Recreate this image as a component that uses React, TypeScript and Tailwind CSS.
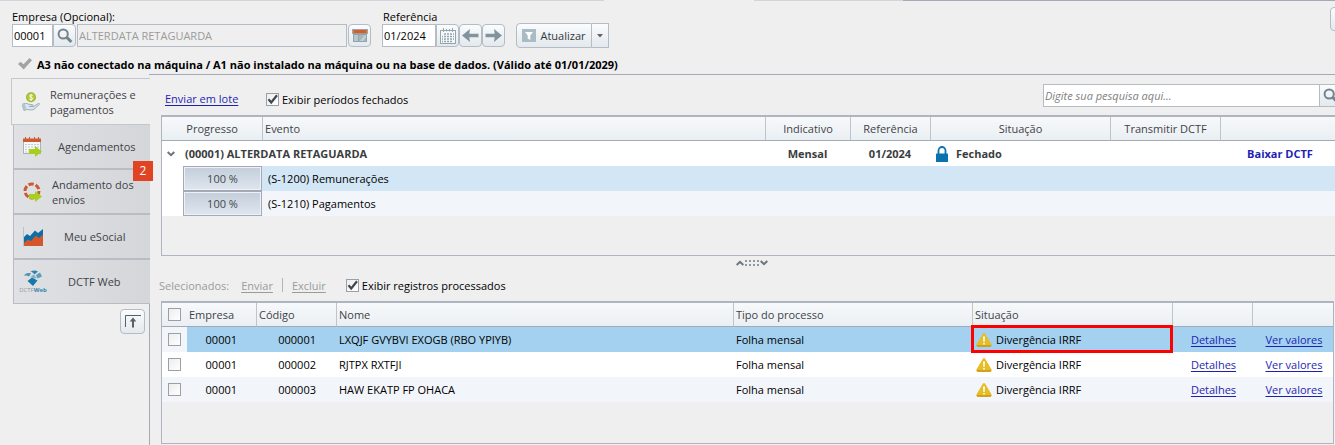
import type { ReactNode } from "react";

type SvgProps = { className?: string };

const iconButton =
  "flex shrink-0 items-center justify-center border border-[#b4bcc6] bg-gradient-to-b from-[#fafcfd] to-[#e4e9ed]";

function SearchIcon({ className }: SvgProps) {
  return (
    <svg viewBox="0 0 16 16" className={className ?? "h-4 w-4"} fill="none" stroke="#74858f">
      <circle cx="6.2" cy="6" r="4.6" strokeWidth="2" />
      <path d="M9.8 9.4 14.4 14" strokeWidth="3" />
    </svg>
  );
}

function WindowIcon() {
  return (
    <svg viewBox="0 0 16 14" className="h-[14px] w-4">
      <rect x="0" y="0" width="16" height="5" fill="#a9a39d" />
      <rect x="1.5" y="1" width="13" height="3.2" fill="#cf5f2e" />
      <rect x="1" y="5" width="14" height="8" fill="#8fa3ad" />
      <rect x="2" y="6" width="4" height="6" fill="#b8c6cd" />
      <rect x="7" y="6" width="7" height="6" fill="#a5b6be" />
      <path d="M8 12 13 6h1v2l-3 4z" fill="#c7d2d7" />
    </svg>
  );
}

function CalendarIcon() {
  return (
    <svg viewBox="0 0 16 16" className="h-4 w-4">
      <rect x="0.5" y="2.5" width="15" height="13" fill="#f7f9fa" stroke="#93a5ae" />
      <path d="M3.5 0v4M12.5 0v4M6.5 1v2.500M9.500 1v2.500" stroke="#93a5ae" />
      <path
        d="M4 6h2M7 6h2M10 6h2M13 6h1M2 8.500h1M4 8.500h2M7 8.500h2M10 8.500h2M13 8.500h1M2 11h1M4 11h2M7 11h2M10 11h2M13 11h1M2 13.500h1M4 13.500h2M7 13.500h2M10 13.500h2"
        stroke="#93a5ae"
        strokeWidth="1.600"
      />
    </svg>
  );
}

function ArrowIcon({ className }: SvgProps) {
  return (
    <svg viewBox="0 0 17 13" className={className ?? "h-[13px] w-[17px]"}>
      <path d="M0 6.500 8 0 7.300 4.700H16.500V8.300H7.300L8 13Z" fill="#81949d" />
    </svg>
  );
}

function FunnelIcon() {
  return (
    <svg viewBox="0 0 14 13" className="h-[13px] w-[14px]">
      <rect width="14" height="13" fill="#a9bbc4" />
      <path d="M3 3h8L8.300 6.500V11L5.700 9.500V6.500Z" fill="#fff" />
    </svg>
  );
}

function CheckMark() {
  return (
    <svg viewBox="0 0 14 12" className="h-3 w-[14px]">
      <path d="M0 6 2.500 3.800 5.500 6.300 11.500 0 14 2.300 5.700 11.500Z" fill="#a3a3a3" />
    </svg>
  );
}

function MoneyHandIcon() {
  return (
    <svg viewBox="0 0 18 19" className="h-[19px] w-[18px]">
      <circle cx="9" cy="5.300" r="5" fill="#9db82b" />
      <circle cx="9" cy="5.300" r="3.700" fill="#b3cc3d" />
      <path d="M10.700 3.300C8.500 2 6.800 3.800 8.500 5c1.800.7 2.700.9 2 2.200-.8.900-2.200.7-3.200 0M9 2v6.800" stroke="#fff" fill="none" strokeWidth="0.900" />
      <path
        d="M0 12.500C2 11.200 4.500 11 6.500 12.200l4 .4c1 .2.900 1.500 0 1.600L7.500 14.400l4 .200 4.700-3c1-.5 1.700.2 1 1l-5 4.600c-1.500 1-5 .8-7 .2L2 18.500Z"
        fill="#dbe5ea"
        stroke="#93a8b3"
        strokeWidth="0.900"
      />
      <path d="M0 12.500 2.800 11.600 4.300 16.700 2 18.500Z" fill="#b5c5ce" />
    </svg>
  );
}

function GreenArrow() {
  return <path d="M6 12h6V9l7 5.500L12 20v-3H6Z" fill="#a8cf1d" />;
}

function ScheduleIcon() {
  return (
    <svg viewBox="0 0 20 20" className="h-5 w-5">
      <rect x="0.500" y="3" width="17" height="13.500" fill="#f6f7f8" stroke="#a8b2b8" />
      <rect x="0" y="1.500" width="18" height="3.500" fill="#cc5a35" />
      <path d="M2.500 0v3M6.500 0v3M11.500 0v3M15.500 0v3" stroke="#cc5a35" />
      <path d="M2 7.500h14M2 10h14M2 12.500h6M2 15h5" stroke="#c2cbd0" strokeDasharray="2 1" />
      <GreenArrow />
    </svg>
  );
}

function ProgressIcon() {
  return (
    <svg viewBox="0 0 20 20" className="h-5 w-5">
      <circle cx="9" cy="9" r="7" fill="none" stroke="#cc5a35" strokeWidth="3" strokeDasharray="5.300 2" />
      <GreenArrow />
    </svg>
  );
}

function ChartIcon() {
  return (
    <svg viewBox="0 0 20 20" className="h-5 w-5">
      <path d="M0.500 0v19.500" stroke="#b9c2cb" />
      <path d="M1 10 4 7 7 9 12 3.500 15 6 20 2V19H1Z" fill="#0d6ea6" />
      <path d="M1 16 5 12.500 8 14 13 8.500 16 11 20 7.500V19H1Z" fill="#d4572c" />
    </svg>
  );
}

function DctfIcon() {
  return (
    <span className="flex flex-col items-center">
      <svg viewBox="0 0 18 16" className="h-4 w-[18px]">
        <path d="M0 5.500C2 3 4.500 2.500 7 3.500L5 6.500C3.500 5.500 2 5.200 0 5.500Z" fill="#4f93b5" />
        <path d="M6.500 1.500C9 0 12 0 14 1.500L10.500 4.500C9.500 3 8.500 2 6.500 1.500Z" fill="#2f86ad" />
        <path d="M12 5 16 2.500 18 6.500 13.500 8.500Z" fill="#5c9dbb" />
        <path d="M3.500 11 8 7.500 13.500 10.500 9 16Z" fill="#1679a8" />
        <path d="M6.500 7 9.500 4.500 12.500 7.500 11 8.800Z" fill="#7fb2c9" />
      </svg>
      <span className="text-[6px] leading-[8px] text-[#8f9ba4]">
        DCTF<b className="text-[#3a87ac]">Web</b>
      </span>
    </span>
  );
}

function CollapseIcon() {
  return (
    <svg viewBox="0 0 16 13" className="h-[13px] w-4" fill="none" stroke="#566168">
      <path d="M0.500 12V0.500H16" />
      <path d="M8 12.500V5" strokeWidth="2" />
      <path d="M4.700 6.500 8 2.500 11.300 6.500Z" fill="#566168" stroke="none" />
    </svg>
  );
}

function ExpandIcon() {
  return (
    <svg viewBox="0 0 16 13" className="h-[13px] w-4" fill="none" stroke="#566168">
      <path d="M0 7.500h5v5H1V7" strokeWidth="2" />
      <path d="M7 6 14 1M9 1h5v5" />
    </svg>
  );
}

function LockIcon() {
  return (
    <svg viewBox="0 0 12 16" className="h-4 w-3 shrink-0">
      <path d="M2.500 8V4.500a3.500 3.500 0 0 1 7 0V8" fill="none" stroke="#0a73ad" strokeWidth="1.800" />
      <rect y="7.500" width="12" height="8.500" rx="0.500" fill="#0a73ad" />
    </svg>
  );
}

function WarningIcon() {
  return (
    <svg viewBox="0 0 16 14" className="h-[14px] w-4 shrink-0">
      <path d="M8 0.300c.8 0 1.200.4 1.600 1.100l5.800 9.900c.7 1.300.1 2.400-1.300 2.400H1.900c-1.400 0-2-1.100-1.300-2.400L6.400 1.400C6.800.7 7.200.3 8 .3Z" fill="#e6bd25" />
      <path d="M.5 12.200c.3.900.8 1.500 1.500 1.500h12c.7 0 1.200-.6 1.500-1.500Z" fill="#c9951b" />
      <path d="M7 3.500h2L8.600 9H7.400ZM7.200 10h1.600v1.500H7.200Z" fill="#fff" />
    </svg>
  );
}

function Chevron({ className }: SvgProps) {
  return (
    <svg viewBox="0 0 8 6" className={className ?? "h-[6px] w-2"} fill="none" stroke="#6d747b" strokeWidth="2">
      <path d="M0.700 1 4 4.200 7.300 1" />
    </svg>
  );
}

function Tick({ label, checked, hiddenLabel }: { label: string; checked?: boolean; hiddenLabel?: boolean }) {
  return (
    <label className="flex items-center gap-[3px] text-black">
      <span className="relative block h-[13px] w-[13px] shrink-0">
        <input
          type="checkbox"
          defaultChecked={checked}
          aria-label={hiddenLabel ? label : undefined}
          className="peer block h-[13px] w-[13px] appearance-none border border-[#9a9fa8] bg-gradient-to-br from-[#eceded] to-white"
        />
        <svg
          viewBox="0 0 13 13"
          className="pointer-events-none absolute inset-0 hidden h-[13px] w-[13px] peer-checked:block"
          fill="none"
          stroke="#40464c"
          strokeWidth="2.200"
        >
          <path d="M2.500 6.300 5.200 9.500 11 2.300" />
        </svg>
      </span>
      {!hiddenLabel && <span>{label}</span>}
    </label>
  );
}

const sideTabs: { label: string; icon: ReactNode; pad: string; badge?: number }[] = [
  { label: "Agendamentos", icon: <ScheduleIcon />, pad: "pl-3.5" },
  { label: "Andamento dos envios", icon: <ProgressIcon />, pad: "pl-2 pr-2", badge: 2 },
  { label: "Meu eSocial", icon: <ChartIcon />, pad: "pl-5" },
  { label: "DCTF Web", icon: <DctfIcon />, pad: "pl-6" },
];

const events = [
  { name: "(S-1200) Remunerações", progress: 100, tone: "bg-[#d2e6f5]" },
  { name: "(S-1210) Pagamentos", progress: 100, tone: "bg-[#f2f5fa]" },
];

const records = [
  { company: "00001", code: "000001", name: "LXQJF GVYBVI EXOGB (RBO YPIYB)", tone: "bg-[#a3d1ef]", lead: "bg-[#f2f5fa]", marked: true },
  { company: "00001", code: "000002", name: "RJTPX RXTFJI", tone: "bg-white", lead: "bg-white", marked: false },
  { company: "00001", code: "000003", name: "HAW EKATP FP OHACA", tone: "bg-[#f2f5fa]", lead: "bg-[#f2f5fa]", marked: false },
];

const headCell =
  "h-6 border-b border-[#a4a9b5] p-0 font-normal text-[#3f4347] bg-gradient-to-b from-[#f7f9fb] to-[#eaeff3]";
const divided = "border-l border-l-[#bfc3cb]";
const link = "text-[#1f1fb4] underline underline-offset-2";

function Header() {
  return (
    <header>
      <div className="flex h-px">
        <div className="w-[604px] bg-[#d3d4da]" />
        <div className="w-[150px]" />
        <div className="w-[149px] bg-[#d3d4da]" />
        <div className="flex-1 bg-[#a4a9b5]" />
      </div>
      <div className="flex items-start pl-3 pt-[9px]">
        <div>
          <label htmlFor="company" className="block h-[14px] leading-[14px]">
            Empresa (Opcional):
          </label>
          <div className="flex h-[23px]">
            <input id="company" defaultValue="00001" className="w-[41px] border border-[#b4bcc6] bg-white px-px" />
            <button aria-label="Pesquisar empresa" className={`${iconButton} w-[23px] rounded-r-sm`}>
              <SearchIcon />
            </button>
            <input
              aria-label="Nome da empresa"
              readOnly
              defaultValue="ALTERDATA RETAGUARDA"
              className="ml-px w-[270px] border border-[#b4bcc6] px-px text-[#9b9b9b]"
            />
            <button aria-label="Abrir cadastro" className={`${iconButton} ml-px w-[23px] rounded-sm`}>
              <WindowIcon />
            </button>
          </div>
        </div>
        <div className="ml-[11px]">
          <label htmlFor="reference" className="block h-[14px] pl-px leading-[14px]">
            Referência
          </label>
          <div className="flex h-[23px]">
            <input id="reference" defaultValue="01/2024" className="w-[54px] border border-[#b4bcc6] bg-white px-px" />
            <button aria-label="Calendário" className={`${iconButton} w-[23px] rounded-r-sm`}>
              <CalendarIcon />
            </button>
            <button aria-label="Mês anterior" className={`${iconButton} w-[23px] rounded-sm`}>
              <ArrowIcon />
            </button>
            <button aria-label="Próximo mês" className={`${iconButton} w-[23px] rounded-sm`}>
              <ArrowIcon className="h-[13px] w-[17px] rotate-180" />
            </button>
          </div>
        </div>
        <div className="ml-[11px] mt-[13px] flex h-[25px]">
          <button className={`${iconButton} w-[76px] gap-1 rounded-l-sm text-[#33383c]`}>
            <FunnelIcon />
            Atualizar
          </button>
          <button aria-label="Mais opções" className={`${iconButton} w-[17px] border-l-0`}>
            <svg viewBox="0 0 6 4" className="h-1 w-1.5">
              <path d="M0 0h6L3 3.500Z" fill="#5d646b" />
            </svg>
          </button>
        </div>
        <button aria-label="Expandir" className={`${iconButton} -mr-5 -mt-[3px] ml-auto h-6 w-[25px] rounded-sm`}>
          <ExpandIcon />
        </button>
      </div>
      <p className="flex h-[26px] items-center gap-[5px] pl-[18px] pt-1.5 font-bold">
        <CheckMark />
        A3 não conectado na máquina / A1 não instalado na máquina ou na base de dados. (Válido até 01/01/2029)
      </p>
    </header>
  );
}

function Sidebar() {
  return (
    <aside className="flex w-[150px] shrink-0 flex-col pl-[11px] pt-1 text-[#3f4347]">
      <nav>
        <button className="flex h-[47px] w-full items-center gap-2.5 border border-r-0 border-[#c3c7ce] pl-2.5 text-left">
          <MoneyHandIcon />
          <span className="flex-1 pr-2">Remunerações e pagamentos</span>
        </button>
        <div className="ml-0.5 border-b border-l border-[#b9bcc4]">
          {sideTabs.map((tab, i) => (
            <button
              key={tab.label}
              className={`relative flex w-full items-center bg-gradient-to-r from-[#dfe1e4] to-[#d4d6da] pl-2 text-left ${
                i < sideTabs.length - 1 ? "h-[45px] border-b-2 border-[#b9bcc4]" : "h-[43px]"
              }`}
            >
              <span className="flex w-[22px] shrink-0 justify-center">{tab.icon}</span>
              <span className={`flex-1 ${tab.pad}`}>{tab.label}</span>
              {tab.badge && (
                <span className="absolute -right-[3px] -top-[9px] z-10 flex h-5 w-5 items-center justify-center bg-[#e04423] text-xs text-white">
                  {tab.badge}
                </span>
              )}
            </button>
          ))}
        </div>
      </nav>
      <div className="flex flex-1 items-start justify-end border-r border-[#a4a9b5] pr-1 pt-[5px]">
        <button aria-label="Recolher menu" className={`${iconButton} h-[25px] w-[25px] rounded-sm`}>
          <CollapseIcon />
        </button>
      </div>
    </aside>
  );
}

function EventsTable() {
  return (
    <div className="-mr-1.5 ml-[11px] min-h-[141px] border border-t-2 border-[#afb5c0]">
      <table className="w-full table-fixed border-separate border-spacing-0">
        <colgroup>
          <col className="w-[21px]" />
          <col className="w-[79px]" />
          <col />
          <col className="w-[85px]" />
          <col className="w-[80px]" />
          <col className="w-[180px]" />
          <col className="w-[110px]" />
          <col className="w-[120px]" />
        </colgroup>
        <thead>
          <tr>
            <th colSpan={2} className={headCell}>Progresso</th>
            <th className={`${headCell} ${divided} pl-0.5 text-left`}>Evento</th>
            <th className={`${headCell} ${divided}`}>Indicativo</th>
            <th className={`${headCell} ${divided}`}>Referência</th>
            <th className={`${headCell} ${divided}`}>Situação</th>
            <th className={`${headCell} ${divided}`}>Transmitir DCTF</th>
            <th className={`${headCell} ${divided}`} />
          </tr>
        </thead>
        <tbody>
          <tr className="bg-white font-bold text-[#3a3d40]">
            <td className="h-[25px] p-0">
              <button aria-label="Recolher grupo" className="ml-[5px] block">
                <Chevron />
              </button>
            </td>
            <td colSpan={2} className="p-0 pl-0.5">(00001) ALTERDATA RETAGUARDA</td>
            <td className="p-0 text-center">Mensal</td>
            <td className="p-0 text-center">01/2024</td>
            <td className="p-0">
              <span className="flex items-center gap-2 pl-1.5">
                <LockIcon />
                Fechado
              </span>
            </td>
            <td className="p-0" />
            <td className="p-0 text-center">
              <a href="#baixar" className="text-[#1f1fb4]">Baixar DCTF</a>
            </td>
          </tr>
          {events.map((event) => (
            <tr key={event.name} className={event.tone}>
              <td className="h-[25px] bg-white p-0" />
              <td className="p-0">
                <div className="flex h-[25px] items-center justify-center border border-[#a4a9b5] bg-gradient-to-b from-[#c3cedb] to-[#dfe6ee] text-[#43484d] shadow-[inset_0_0_0_1px_#eef1f5]">
                  {event.progress} %
                </div>
              </td>
              <td colSpan={6} className="p-0 pl-1.5">{event.name}</td>
            </tr>
          ))}
        </tbody>
      </table>
    </div>
  );
}

function RecordsTable() {
  return (
    <div className="mb-px ml-[11px] mr-px flex-1 border border-t-2 border-[#afb5c0]">
      <table className="w-full table-fixed border-separate border-spacing-0">
        <colgroup>
          <col className="w-[25px]" />
          <col className="w-[69px]" />
          <col className="w-[80px]" />
          <col />
          <col className="w-[239px]" />
          <col className="w-[200px]" />
          <col className="w-[80px]" />
          <col className="w-[81px]" />
        </colgroup>
        <thead>
          <tr className="text-left">
            <th className={`${headCell} pl-1.5`}>
              <Tick label="Selecionar todos" hiddenLabel />
            </th>
            <th className={`${headCell} pl-0.5`}>Empresa</th>
            <th className={`${headCell} ${divided} pl-0.5`}>Código</th>
            <th className={`${headCell} ${divided} pl-0.5`}>Nome</th>
            <th className={`${headCell} ${divided} pl-0.5`}>Tipo do processo</th>
            <th className={`${headCell} ${divided} pl-0.5`}>Situação</th>
            <th className={`${headCell} ${divided}`} />
            <th className={`${headCell} ${divided}`} />
          </tr>
        </thead>
        <tbody>
          {records.map((record) => (
            <tr key={record.code} className={record.tone}>
              <td className={`h-[25px] p-0 pl-1.5 ${record.lead}`}>
                <Tick label={`Selecionar ${record.code}`} hiddenLabel />
              </td>
              <td className="p-0 pr-[19px] text-right">{record.company}</td>
              <td className="p-0 pr-5 text-right">{record.code}</td>
              <td className="p-0 pl-[3px]">{record.name}</td>
              <td className="p-0 pl-[3px]">Folha mensal</td>
              <td className="relative p-0 pl-1">
                <span className="flex items-center gap-1">
                  <WarningIcon />
                  Divergência IRRF
                </span>
                {record.marked && (
                  <span className="absolute -inset-x-px -bottom-px -top-0.5 border-3 border-[#fe0000]" />
                )}
              </td>
              <td className="p-0 pl-[3px] text-center">
                <a href="#detalhes" className={link}>Detalhes</a>
              </td>
              <td className="p-0 pl-[3px] text-center">
                <a href="#valores" className={link}>Ver valores</a>
              </td>
            </tr>
          ))}
        </tbody>
      </table>
    </div>
  );
}

export default function App() {
  return (
    <div className="flex min-h-screen flex-col overflow-hidden bg-[#efefef] font-['Open_Sans','Noto_Sans',sans-serif] text-[11px] leading-[15px] text-black">
      <Header />
      <div className="flex flex-1">
        <Sidebar />
        <main className="-ml-px flex min-w-0 flex-1 flex-col border-t border-[#a4a9b5] pl-px">
          <div className="flex h-10 items-start pl-[15px]">
            <a href="#lote" className={`${link} mt-4 w-[101px]`}>Enviar em lote</a>
            <div className="mt-[17px]">
              <Tick label="Exibir períodos fechados" checked />
            </div>
            <div className="-mr-2 ml-auto mt-[9px] flex h-[23px]">
              <input
                type="search"
                aria-label="Pesquisa"
                placeholder="Digite sua pesquisa aqui..."
                className="w-[277px] border border-[#b4bcc6] bg-white px-px italic placeholder:text-[#808080]"
              />
              <button aria-label="Pesquisar" className={`${iconButton} w-[23px] border-l-0`}>
                <SearchIcon />
              </button>
            </div>
          </div>
          <EventsTable />
          <div className="flex h-[13px] items-center justify-center gap-px pl-[18px]">
            <Chevron className="h-[6px] w-2 rotate-180" />
            <svg viewBox="0 0 14 6" className="h-[6px] w-[14px]" fill="none" stroke="#8f97a5" strokeWidth="2">
              <path d="M0 1h14M0 5h14" strokeDasharray="2 2" />
            </svg>
            <Chevron />
          </div>
          <div className="flex h-8 items-center pl-[9px] text-[#9b9b9b]">
            <span>Selecionados:</span>
            <button disabled className="ml-3 underline underline-offset-2">Enviar</button>
            <span className="mx-[9px] h-[14px] w-px bg-[#b4b4b4]" />
            <button disabled className="mr-5 underline underline-offset-2">Excluir</button>
            <Tick label="Exibir registros processados" checked />
          </div>
          <RecordsTable />
        </main>
      </div>
    </div>
  );
}
